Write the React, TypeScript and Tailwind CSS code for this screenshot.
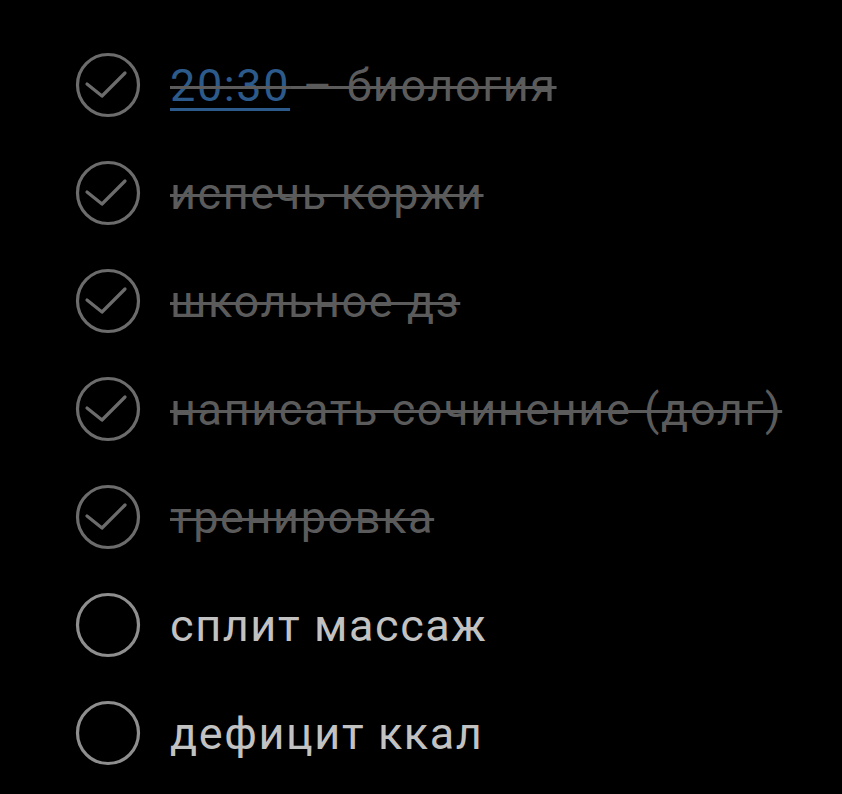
import React from "react";

type Task = { time?: string; text: string; done: boolean };

const tasks: Task[] = [
  { time: "20:30", text: " – биология", done: true },
  { text: "испечь коржи", done: true },
  { text: "школьное дз", done: true },
  { text: "написать сочинение (долг)", done: true },
  { text: "тренировка", done: true },
  { text: "сплит массаж", done: false },
  { text: "дефицит ккал", done: false },
];

function Circle({ done }: { done: boolean }) {
  return (
    <svg width="66" height="66" viewBox="0 0 66 66" className="shrink-0">
      <circle
        cx="33"
        cy="33"
        r="30.5"
        fill="none"
        stroke={done ? "#6c6c6c" : "#8e8e8e"}
        strokeWidth="3.2"
      />
      {done && (
        <path
          d="M12 32 L27 44 L50 21"
          fill="none"
          stroke="#6c6c6c"
          strokeWidth="3.2"
          strokeLinecap="round"
          strokeLinejoin="round"
        />
      )}
    </svg>
  );
}

export default function App() {
  return (
    <div
      className="w-[842px] h-[794px] bg-black pt-[31px] pl-[75px]"
      style={{ fontFamily: "Roboto, 'Noto Sans', sans-serif" }}
    >
      {tasks.map((t, i) => (
        <div key={i} className="flex items-center h-[108px] gap-[29px]">
          <Circle done={t.done} />
          {t.done ? (
            <span className="text-[45px] leading-none tracking-[1.6px] text-[#5b5b5b] line-through decoration-[#5b5b5b] decoration-[2.5px] whitespace-pre">
              {t.time && (
                <span className="text-[#2c5a8a] underline decoration-[#2c5a8a] decoration-[2.5px] underline-offset-[7px]">
                  {t.time}
                </span>
              )}
              {t.text}
            </span>
          ) : (
            <span className="text-[45px] leading-none tracking-[1.6px] text-[#c2c2c2]">
              {t.text}
            </span>
          )}
        </div>
      ))}
    </div>
  );
}
